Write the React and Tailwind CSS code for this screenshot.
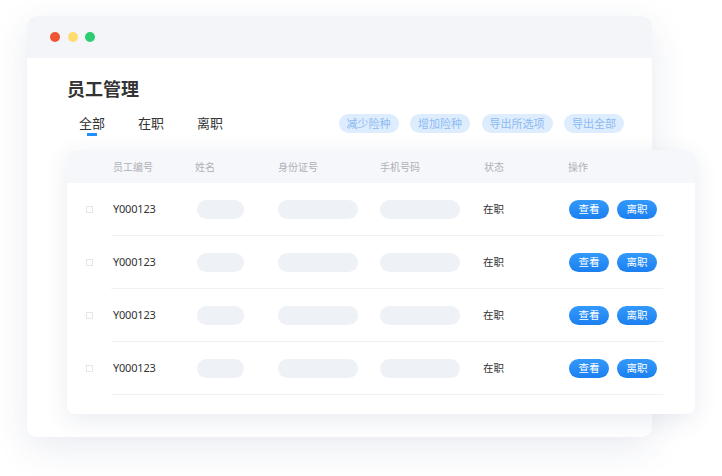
import React from "react";

const rows = [0, 1, 2, 3];

function Row() {
  return (
    <div>
      <div className="flex h-[52px] items-center pl-[19px] text-[11px] text-[#333]">
        <div className="w-[27px]">
          <div className="h-[7px] w-[7px] border border-[#e4e6ea]" />
        </div>
        <div className="w-[84px] tracking-[-0.2px]" style={{ fontFamily: '"Noto Sans", "Noto Sans CJK SC", sans-serif' }}>Y000123</div>
        <div className="w-[81px]">
          <div className="h-[19px] w-[47px] rounded-full bg-[#eef1f5]" />
        </div>
        <div className="w-[102px]">
          <div className="h-[19px] w-[80px] rounded-full bg-[#eef1f5]" />
        </div>
        <div className="w-[103px]">
          <div className="h-[19px] w-[80px] rounded-full bg-[#eef1f5]" />
        </div>
        <div className="w-[86px] text-[10.5px]">在职</div>
        <div className="flex gap-[8px]">
          <div className="flex h-[19px] w-[40px] items-center justify-center rounded-full bg-gradient-to-b from-[#3399fb] to-[#1c7ff0] text-[10.5px] text-white">查看</div>
          <div className="flex h-[19px] w-[40px] items-center justify-center rounded-full bg-gradient-to-b from-[#3399fb] to-[#1c7ff0] text-[10.5px] text-white">离职</div>
        </div>
      </div>
      <div className="ml-[44px] mr-[32px] h-px bg-[#f0f1f4]" />
    </div>
  );
}

export default function App() {
  return (
    <div
      className="h-[476px] w-[722px] overflow-hidden bg-white pl-[27px] pt-[16px]"
      style={{ fontFamily: '"Noto Sans CJK SC", "Noto Sans", sans-serif' }}
    >
      <div className="h-[421px] w-[625px] rounded-[10px] bg-white shadow-[0_10px_36px_rgba(40,60,110,0.10)]">
        <div className="flex h-[42px] items-center gap-[7.5px] rounded-t-[10px] bg-[#f4f5f9] pl-[23px]">
          <div className="h-[10px] w-[10px] rounded-full bg-[#ef5535]" />
          <div className="h-[10px] w-[10px] rounded-full bg-[#fedc6e]" />
          <div className="h-[10px] w-[10px] rounded-full bg-[#2ecc71]" />
        </div>
        <div className="pl-[40px] pt-[18px]">
          <div className="text-[18px] font-bold leading-[24px] text-[#333]">员工管理</div>
          <div className="mt-[14px] flex items-start pr-[28px]">
            <div className="ml-[12px] flex gap-[33px] text-[13px] text-[#333]">
              <div className="flex flex-col items-center">
                <div className="leading-[18px]">全部</div>
                <div className="mt-[1px] h-[3px] w-[10px] bg-[#1e8fff]" />
              </div>
              <div className="leading-[18px]">在职</div>
              <div className="leading-[18px]">离职</div>
            </div>
            <div className="ml-auto flex gap-[11.5px] text-[11px] text-[#8cbaf2]">
              <div className="flex h-[19px] w-[60px] items-center justify-center rounded-full bg-[#deedfe]">减少险种</div>
              <div className="flex h-[19px] w-[60px] items-center justify-center rounded-full bg-[#deedfe]">增加险种</div>
              <div className="flex h-[19px] w-[71px] items-center justify-center rounded-full bg-[#deedfe]">导出所选项</div>
              <div className="flex h-[19px] w-[60px] items-center justify-center rounded-full bg-[#deedfe]">导出全部</div>
            </div>
          </div>
          <div className="mr-[-43px] mt-[14px] h-[264px] rounded-[8px] bg-white pb-[19px] shadow-[0_6px_24px_rgba(40,60,110,0.10)]">
            <div className="flex h-[33px] items-center rounded-t-[8px] bg-[#f6f7fa] pl-[46px] text-[10px] text-[#aeb1b8]">
              <div className="w-[82px]">员工编号</div>
              <div className="w-[83px]">姓名</div>
              <div className="w-[102px]">身份证号</div>
              <div className="w-[104px]">手机号码</div>
              <div className="w-[84px]">状态</div>
              <div>操作</div>
            </div>
            {rows.map((r) => (
              <Row key={r} />
            ))}
          </div>
        </div>
      </div>
    </div>
  );
}
